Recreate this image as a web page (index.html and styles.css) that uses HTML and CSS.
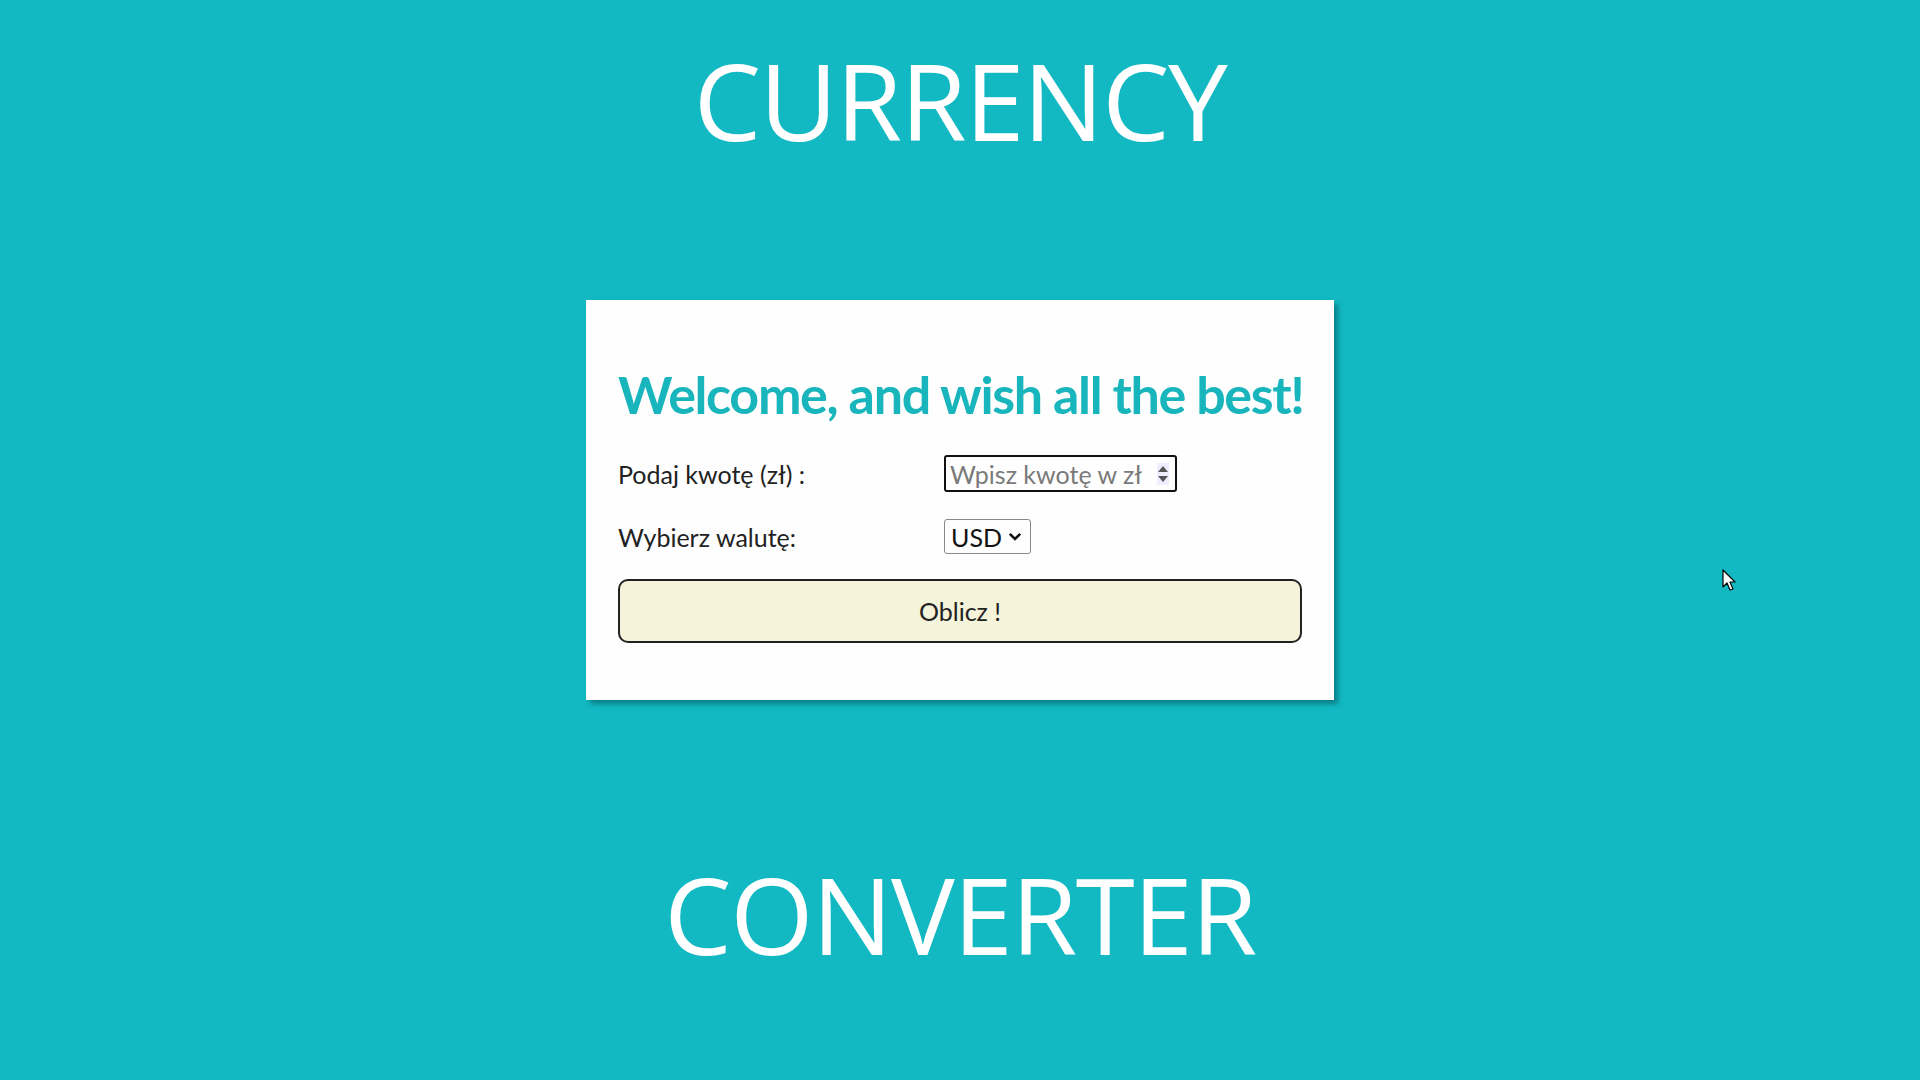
FILE: index.html
```html
<!DOCTYPE html>
<html lang="pl">
<head>
<meta charset="utf-8">
<title>Currency Converter</title>
<link rel="stylesheet" href="styles.css">
</head>
<body>
<div class="page">
  <h1 class="big-title big-title--top">CURRENCY</h1>
  <form class="card">
    <h2 class="card__title">Welcome, and wish all the best!</h2>
    <div class="card__grid">
      <label class="card__label" for="amount">Podaj kwotę (zł) :</label>
      <div class="card__field">
        <div class="fake-input">
          <span class="fake-input__placeholder">Wpisz kwotę w zł</span>
          <span class="spinner">
            <svg width="12" height="22" viewBox="0 0 12 22"><path d="M6 3 L11 9 L1 9 Z" fill="#555"/><path d="M6 19 L11 13 L1 13 Z" fill="#555"/></svg>
          </span>
        </div>
      </div>
      <label class="card__label" for="currency">Wybierz walutę:</label>
      <div class="card__field">
        <div class="fake-select">
          <span>USD</span>
          <svg class="fake-select__chev" width="14" height="9" viewBox="0 0 14 9"><path d="M1.8 1.8 L7 7 L12.2 1.8" fill="none" stroke="#111" stroke-width="2.6"/></svg>
        </div>
      </div>
    </div>
    <button type="button" class="card__button">Oblicz !</button>
  </form>
  <h1 class="big-title big-title--bottom">CONVERTER</h1>
</div>
<svg class="cursor" width="16" height="24" viewBox="0 0 16 24"><path d="M1 1 L1 18 L5 14 L8 21 L11 20 L8 13 L13 13 Z" fill="#fff" stroke="#000" stroke-width="1.2" stroke-linejoin="round"/></svg>
</body>
</html>
```
FILE: styles.css
```css
html, body {
  margin: 0;
  padding: 0;
}
body {
  background: #12b9c2;
  width: 1920px;
  height: 1080px;
  overflow: hidden;
  position: relative;
  font-family: "Lato", "Open Sans", sans-serif;
}
.page {
  display: flex;
  flex-direction: column;
  align-items: center;
}
.big-title {
  font-family: "Open Sans", sans-serif;
  font-weight: 400;
  font-size: 107px;
  line-height: 144px;
  color: #ffffff;
  margin: 0;
  letter-spacing: -1.5px;
}
.big-title--top {
  margin-top: 28px;
}
.big-title--bottom {
  margin-top: 142px;
}
.card {
  box-sizing: border-box;
  width: 748px;
  height: 400px;
  margin-top: 128px;
  background: #fefefe;
  padding: 63px 32px 0 32px;
  box-shadow: 4px 4px 5px rgba(0, 60, 70, 0.45);
}
.card__title {
  margin: 0;
  font-family: "Lato", sans-serif;
  font-weight: 700;
  font-size: 52px;
  line-height: 62px;
  color: #19b5bc;
  letter-spacing: -1.35px;
  white-space: nowrap;
}
.card__grid {
  margin-top: 30px;
  display: grid;
  grid-template-columns: 326px 1fr;
  row-gap: 27px;
  align-items: center;
}
.card__label {
  font-size: 25px;
  color: #222;
}
.fake-input {
  box-sizing: border-box;
  width: 233px;
  height: 37px;
  border: 2px solid #111;
  border-radius: 3px;
  display: flex;
  align-items: center;
  padding: 0 6px 0 4px;
  justify-content: space-between;
}
.fake-input__placeholder {
  font-size: 25px;
  color: #7a7a7a;
  white-space: nowrap;
}
.spinner {
  display: flex;
  align-items: center;
  background: #eef;
}
.fake-select {
  box-sizing: border-box;
  width: 87px;
  height: 35px;
  border: 1px solid #888;
  border-radius: 3px;
  display: flex;
  align-items: center;
  gap: 6px;
  padding-left: 6px;
  font-size: 25px;
  color: #111;
}
.card__button {
  display: block;
  margin-top: 25px;
  box-sizing: border-box;
  width: 684px;
  height: 64px;
  border: 2px solid #222;
  border-radius: 10px;
  background: #f5f4da;
  font-family: "Lato", sans-serif;
  font-size: 25px;
  color: #222;
  padding: 0;
}
.cursor {
  position: absolute;
  left: 1722px;
  top: 569px;
}
```
